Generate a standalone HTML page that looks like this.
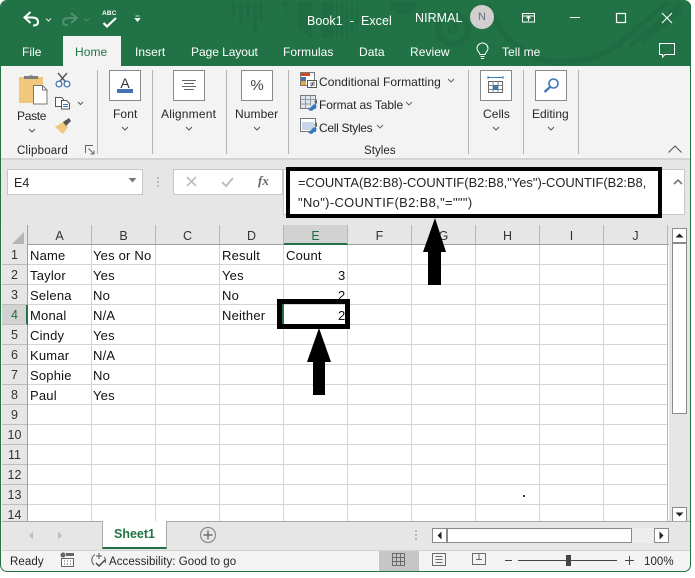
<!DOCTYPE html>
<html><head><meta charset="utf-8">
<style>
html,body{margin:0;padding:0;background:#fff;}
body{width:695px;height:578px;overflow:hidden;position:relative;font-family:"Liberation Sans",sans-serif;color:#262626;}
.a{position:absolute;white-space:nowrap;}
.t{position:absolute;white-space:nowrap;font-size:12px;line-height:16px;margin-top:1px;letter-spacing:.05px;}
.w{color:#fff;}
.c{position:absolute;white-space:nowrap;font-size:13px;line-height:20px;color:#111;letter-spacing:.2px;margin-top:1px;}
.h{position:absolute;text-align:center;font-size:12.5px;line-height:19px;color:#333;margin-top:1px;}
.bx{position:absolute;background:#fff;border:1px solid #8a8a8a;box-sizing:border-box;}
</style></head>
<body>
<div class="a" style="left:1px;top:1px;width:690px;height:571px;background:#f3f3f3;border-radius:6px;overflow:hidden"></div>
<!-- title -->
<div class="a" style="left:1px;top:1px;width:690px;height:65px;background:#217346;border-radius:6px 6px 0 0;overflow:hidden"></div>
<svg class="a" style="left:0;top:0" width="695" height="66" viewBox="0 0 695 66">
<g fill="#1f6c43">
<rect x="232" y="2" width="3" height="15"/><rect x="239" y="2" width="4" height="23"/><rect x="246" y="2" width="4" height="16"/><rect x="253" y="2" width="4" height="31"/><rect x="259" y="2" width="4" height="20"/>
<path d="M281 2h6v13z"/><path d="M298 2h14v36l-14-9z"/><path d="M321 2h12v36h-12z"/><path d="M336 2h2v36h-2zM341 2h2v36h-2zM346 2h2v36h-2zM351 2h2v30h-2zM356 2h2v25h-2z"/>
<path d="M389 2h28a14 12 0 0 1-28 0z"/>
</g>
<g fill="none" stroke="#1f6c43">
<circle cx="453" cy="29" r="15" stroke-width="6"/><circle cx="453" cy="29" r="4" stroke-width="3"/>
<path d="M487 2C500 40 530 62 560 62C590 62 610 52 622 42" stroke-width="6"/>
<path d="M618 44L668 2M630 46L681 4M642 42L682 10" stroke-width="5"/>
</g>
</svg>
<!-- QAT -->
<svg class="a" style="left:20px;top:8px" width="130" height="24" viewBox="0 0 130 24">
<path d="M10.500 4L4.500 9.500L10.500 15M4.500 9.500H12Q18 9.500 18 14Q18 17.500 13 17.500" fill="none" stroke="#fff" stroke-width="2"/>
<path d="M26 10.500l2.500 2.500 2.500-2.500" fill="none" stroke="#dfeee6" stroke-width="1"/>
<path d="M51 5L57 10L51 15M57 10H49Q43 10 43 14Q43 17 48 17" fill="none" stroke="#4f9070" stroke-width="2"/>
<path d="M64 10.500l2.500 2.500 2.500-2.500" fill="none" stroke="#4f9070" stroke-width="1"/>
<path d="M83.500 15l3.500 3.500 9-8.500" fill="none" stroke="#fff" stroke-width="2.200"/>
<path d="M115.500 8h4M115 10.500h5l-2.500 3z" fill="#fff" stroke="#fff" stroke-width=".7"/>
</svg>
<div class="a" style="left:102px;top:10px;font-size:6.500px;font-weight:bold;color:#fff;line-height:8px;letter-spacing:.2px">ABC</div>
<div class="t w" style="left:307px;top:12px;font-size:12.500px">Book1&nbsp; -&nbsp; Excel</div>
<div class="t w" style="left:415px;top:9px;font-size:12.500px">NIRMAL</div>
<div class="a" style="left:470px;top:5px;width:24px;height:24px;border-radius:50%;background:#d2d0ce;color:#6b6b88;font-size:11px;line-height:24px;text-align:center">N</div>
<svg class="a" style="left:520px;top:8px" width="170" height="20" viewBox="0 0 170 20">
<path d="M2.500 8h12M2.500 5.500h12v8.500h-12zM8.500 13V8.500M6.500 10.500l2-2 2 2" fill="none" stroke="#fff" stroke-width="1"/>
<path d="M50 9.500h10" stroke="#fff" stroke-width="1"/>
<rect x="96.500" y="5.500" width="9" height="9" fill="none" stroke="#fff" stroke-width="1.200"/>
<path d="M142 5l10 10M152 5l-10 10" stroke="#fff" stroke-width="1.100"/>
</svg>
<!-- tabs -->
<div class="a" style="left:63px;top:36px;width:58px;height:30px;background:#f3f3f3"></div>
<div class="t w" style="left:22px;top:43px">File</div>
<div class="t" style="left:75px;top:43px;color:#217346">Home</div>
<div class="t w" style="left:135px;top:43px">Insert</div>
<div class="t w" style="left:191px;top:43px;letter-spacing:-.05px">Page Layout</div>
<div class="t w" style="left:283px;top:43px">Formulas</div>
<div class="t w" style="left:359px;top:43px">Data</div>
<div class="t w" style="left:410px;top:43px">Review</div>
<div class="t w" style="left:502px;top:43px">Tell me</div>
<svg class="a" style="left:474px;top:42px" width="18" height="18" viewBox="0 0 18 18"><path d="M6 12.500C5.500 10 3 9.500 3 6.500a5.500 5.500 0 0 1 11 0c0 3-2.500 3.500-3 6zM6.500 14.500h4M7 16.500h3" fill="none" stroke="#fff" stroke-width="1"/></svg>
<svg class="a" style="left:658px;top:42px" width="18" height="18" viewBox="0 0 18 18"><path d="M1.500 1.500h15v11H7L4.500 15v-2.500h-3z" fill="none" stroke="#fff" stroke-width="1"/></svg>
<!-- ribbon -->
<div class="a" style="left:1px;top:158px;width:690px;height:2px;background:#d4d4d4"></div>
<div class="a" style="left:97px;top:70px;width:1px;height:84px;background:#b5b5b5"></div>
<div class="a" style="left:152px;top:70px;width:1px;height:84px;background:#b5b5b5"></div>
<div class="a" style="left:226px;top:70px;width:1px;height:84px;background:#b5b5b5"></div>
<div class="a" style="left:288px;top:70px;width:1px;height:84px;background:#b5b5b5"></div>
<div class="a" style="left:468px;top:70px;width:1px;height:84px;background:#b5b5b5"></div>
<div class="a" style="left:523px;top:70px;width:1px;height:84px;background:#b5b5b5"></div>
<div class="a" style="left:578px;top:70px;width:1px;height:84px;background:#b5b5b5"></div>
<!-- clipboard icons -->
<svg class="a" style="left:0;top:66px" width="97" height="72" viewBox="0 66 97 72">
<path d="M19 77h24v26H19z" fill="#f0c77b"/>
<path d="M24 79v-3h5a3 2.500 0 0 1 4 0h5v3z" fill="#7d7d7d"/>
<path d="M33.500 85.500h9l4.500 4.500v14H33.500z" fill="#fff" stroke="#777" stroke-width="1"/>
<path d="M42.500 85.500v4.500H47" fill="none" stroke="#777"/>
<path d="M58 73l9 10.500M67 73l-9 10.500" stroke="#555" stroke-width="1.400"/>
<circle cx="59" cy="84" r="2.900" fill="#fff" stroke="#3a78b8" stroke-width="1.300"/><circle cx="67" cy="84" r="2.900" fill="#fff" stroke="#3a78b8" stroke-width="1.300"/>
<path d="M55.500 97.500h6l2 2v2h-2v5h-6z" fill="#fff" stroke="#555"/><path d="M61.500 100.500h5l3 3v5.500h-8z" fill="#fff" stroke="#555"/><path d="M63 104.500h5M63 106.500h5" stroke="#3a78b8"/>
<path d="M78 102l2.500 2.500L83 102" fill="none" stroke="#555"/>
<path d="M55 127l8-5 5 5-5 7z" fill="#f0c77b"/><path d="M63 122l6-4 2 3-5 5z" fill="#555"/>
</svg>
<div class="t" style="left:17px;top:107px;letter-spacing:-.3px">Paste</div>
<svg class="a" style="left:28px;top:128px" width="8" height="6"><path d="M1 1l3 3 3-3" fill="none" stroke="#555"/></svg>
<div class="t" style="left:17px;top:142px;font-size:11.500px;letter-spacing:.2px">Clipboard</div>
<svg class="a" style="left:85px;top:145px" width="10" height="10"><path d="M.5 8V.5H8M3.500 3.500L9 9M5.500 9H9V5.500" fill="none" stroke="#666"/></svg>
<!-- boxes -->
<div class="bx" style="left:109px;top:70px;width:32px;height:31px"></div>
<div class="a" style="left:109px;top:75px;width:32px;text-align:center;font-size:14px;line-height:16px;color:#333">A</div>
<div class="a" style="left:117px;top:89px;width:16px;height:4px;background:#4472b4"></div>
<div class="t" style="left:113px;top:105px;letter-spacing:.1px">Font</div>
<div class="bx" style="left:173px;top:70px;width:32px;height:31px"></div>
<svg class="a" style="left:173px;top:70px" width="32" height="31"><path d="M9 10.500h14M11 13.500h10M9 16.500h14M11 19.500h10" stroke="#666"/></svg>
<div class="t" style="left:161px;top:105px;letter-spacing:.2px">Alignment</div>
<div class="bx" style="left:241px;top:70px;width:32px;height:31px"></div>
<div class="a" style="left:241px;top:77px;width:32px;text-align:center;font-size:15px;line-height:17px;color:#444">%</div>
<div class="t" style="left:235px;top:105px;letter-spacing:.1px">Number</div>
<svg class="a" style="left:120px;top:126px" width="10" height="6"><path d="M2 1l3 3 3-3" fill="none" stroke="#555"/></svg>
<svg class="a" style="left:184px;top:126px" width="10" height="6"><path d="M2 1l3 3 3-3" fill="none" stroke="#555"/></svg>
<svg class="a" style="left:252px;top:126px" width="10" height="6"><path d="M2 1l3 3 3-3" fill="none" stroke="#555"/></svg>
<!-- styles -->
<svg class="a" style="left:300px;top:71px" width="19" height="66" viewBox="0 0 19 66">
<rect x=".5" y="1.500" width="14" height="13" fill="#fff" stroke="#777"/><rect x="1" y="2" width="9" height="3" fill="#d24726"/><rect x="1" y="6" width="5" height="4" fill="#4472b4"/><rect x="1" y="10" width="5" height="4" fill="#e8a33d"/>
<rect x="7.500" y="9.500" width="9" height="7" fill="#fff" stroke="#555"/><path d="M10 12h5M10 14h5M13.500 10.500l-2 5" stroke="#444" stroke-width=".8" fill="none"/>
<path d="M.5 24.500h15v13H.5z" fill="#dce6f2" stroke="#777"/><path d="M.5 28.500h15M.5 33h10M5.500 24.500v13M10.500 24.500v10" stroke="#999"/>
<path d="M8 39l6-6 3 2-5 5z" fill="#3a78b8"/><path d="M14 31l3-3v5z" fill="#666"/>
<path d="M.5 47.500h15v13H.5z" fill="#fff" stroke="#777"/><rect x="2" y="51" width="12" height="8" fill="#c5d5ea"/>
<path d="M8 62l6-6 3 2-5 5z" fill="#3a78b8"/><path d="M14 54l3-3v5z" fill="#666"/>
</svg>
<div class="t" style="left:319px;top:73px">Conditional Formatting</div>
<div class="t" style="left:319px;top:96px;letter-spacing:-.12px">Format as Table</div>
<div class="t" style="left:319px;top:119px;letter-spacing:-.3px">Cell Styles</div>
<svg class="a" style="left:447px;top:78px" width="8" height="6"><path d="M1 1l3 3 3-3" fill="none" stroke="#666"/></svg>
<svg class="a" style="left:405px;top:101px" width="8" height="6"><path d="M1 1l3 3 3-3" fill="none" stroke="#666"/></svg>
<svg class="a" style="left:376px;top:124px" width="8" height="6"><path d="M1 1l3 3 3-3" fill="none" stroke="#666"/></svg>
<div class="t" style="left:364px;top:142px;font-size:11.500px">Styles</div>
<!-- cells/editing -->
<div class="bx" style="left:480px;top:70px;width:32px;height:31px"></div>
<svg class="a" style="left:480px;top:70px" width="32" height="31">
<path d="M8 7.500h15M8 6v3M23 6v3" stroke="#3a78b8"/><rect x="8.500" y="11.500" width="14" height="11" fill="#fff" stroke="#666"/><path d="M8.500 15.500h14M8.500 19.500h14M13 11.500v11M18 11.500v11" stroke="#888"/><rect x="13" y="15" width="5" height="5" fill="#3a78b8"/></svg>
<div class="t" style="left:483px;top:105px">Cells</div>
<div class="bx" style="left:535px;top:70px;width:32px;height:31px"></div>
<svg class="a" style="left:535px;top:70px" width="32" height="31"><circle cx="18.500" cy="13.500" r="4.500" fill="none" stroke="#3a78b8" stroke-width="1.600"/><path d="M15 17l-5.500 5" stroke="#3a78b8" stroke-width="2.200"/></svg>
<div class="t" style="left:532px;top:105px;letter-spacing:0">Editing</div>
<svg class="a" style="left:491px;top:126px" width="10" height="6"><path d="M2 1l3 3 3-3" fill="none" stroke="#555"/></svg>
<svg class="a" style="left:546px;top:126px" width="10" height="6"><path d="M2 1l3 3 3-3" fill="none" stroke="#555"/></svg>
<svg class="a" style="left:667px;top:144px" width="16" height="10"><path d="M1.500 8.500L8 2l6.500 6.500" fill="none" stroke="#555" stroke-width="1.100"/></svg>
<!-- formula zone -->
<div class="a" style="left:1px;top:160px;width:690px;height:65px;background:#e6e6e6"></div>
<div class="a" style="left:7px;top:169px;width:136px;height:26px;background:#fff;border:1px solid #c6c6c6;box-sizing:border-box"></div>
<div class="t" style="left:14px;top:174px;font-size:12.500px">E4</div>
<svg class="a" style="left:128px;top:178px" width="10" height="6"><path d="M.5 0h8L4.500 4.500z" fill="#777"/></svg>
<div class="a" style="left:157px;top:177px;width:2px;height:2px;background:#bbb;box-shadow:0 4px 0 #bbb,0 8px 0 #bbb"></div>
<div class="a" style="left:173px;top:169px;width:110px;height:26px;background:#fff;border:1px solid #c6c6c6;box-sizing:border-box"></div>
<svg class="a" style="left:184px;top:175px" width="60" height="14"><path d="M3 2l9 9M12 2l-9 9" stroke="#bdbdbd" stroke-width="1.600"/><path d="M38 7l4 4 7-8" fill="none" stroke="#bdbdbd" stroke-width="2"/></svg>
<div class="a" style="left:258px;top:173px;font-family:'Liberation Serif',serif;font-style:italic;font-size:13px;line-height:16px;color:#666;font-weight:bold">fx</div>
<div class="a" style="left:283px;top:169px;width:402px;height:46px;background:#fff;border:1px solid #c6c6c6;box-sizing:border-box"></div>
<svg class="a" style="left:672px;top:178px" width="12" height="8"><path d="M2 6l4-4 4 4" fill="none" stroke="#777" stroke-width="1.600"/></svg>
<div class="a" style="left:298px;top:173px;font-size:12.900px;line-height:20px;color:#222">=COUNTA(B2:B8)-COUNTIF(B2:B8,"Yes")-COUNTIF(B2:B8,</div>
<div class="a" style="left:298px;top:193px;font-size:12.900px;line-height:20px;color:#222;letter-spacing:.38px">"No")-COUNTIF(B2:B8,"=""")</div>
<div class="a" style="left:286px;top:167px;width:376px;height:51px;border:4px solid #000;box-sizing:border-box"></div>
<!-- grid -->
<div class="a" style="left:2px;top:225px;width:667px;height:296px;background:#fff"></div>
<div class="a" style="left:2px;top:225px;width:667px;height:20px;background:#e6e6e6;border-bottom:1px solid #9f9f9f;box-sizing:border-box"></div>
<div class="a" style="left:2px;top:225px;width:26px;height:296px;background:#e6e6e6;border-right:1px solid #9f9f9f;box-sizing:border-box"></div>
<div class="a" style="left:284px;top:225px;width:64px;height:20px;background:#d2d2d2;border-bottom:2px solid #217346;box-sizing:border-box"></div>
<div class="a" style="left:2px;top:305px;width:26px;height:20px;background:#d2d2d2;border-right:2px solid #217346;box-sizing:border-box"></div>
<svg class="a" style="left:0;top:225px" width="670" height="296" viewBox="0 0 670 296">
<path d="M12 19L24 7v12z" fill="#b4b4b4"/>
<g stroke="#d4d4d4" stroke-width="1">
<path d="M91.500 20V296M155.500 20V296M219.500 20V296M283.500 20V296M347.500 20V296M411.500 20V296M475.500 20V296M539.500 20V296M603.500 20V296"/>
<path d="M28 39.500H668M28 59.500H668M28 79.500H668M28 99.500H668M28 119.500H668M28 139.500H668M28 159.500H668M28 179.500H668M28 199.500H668M28 219.500H668M28 239.500H668M28 259.500H668M28 279.500H668"/>
<path d="M2 39.500H27M2 59.500H27M2 79.500H27M2 99.500H27M2 119.500H27M2 139.500H27M2 159.500H27M2 179.500H27M2 199.500H27M2 219.500H27M2 239.500H27M2 259.500H27M2 279.500H27" stroke="#bdbdbd"/>
</g>
<path d="M91.500 0V19M155.500 0V19M219.500 0V19M283.500 0V19M347.500 0V19M411.500 0V19M475.500 0V19M539.500 0V19M603.500 0V19M667.500 0V296" stroke="#b5b5b5"/>
</svg>
<div class="h" style="left:28px;top:226px;width:63px">A</div><div class="h" style="left:92px;top:226px;width:63px">B</div><div class="h" style="left:156px;top:226px;width:63px">C</div><div class="h" style="left:220px;top:226px;width:63px">D</div><div class="h" style="left:284px;top:226px;width:63px;color:#1f6b43">E</div><div class="h" style="left:348px;top:226px;width:63px">F</div><div class="h" style="left:412px;top:226px;width:63px">G</div><div class="h" style="left:476px;top:226px;width:63px">H</div><div class="h" style="left:540px;top:226px;width:63px">I</div><div class="h" style="left:604px;top:226px;width:63px">J</div>
<div class="h" style="left:2px;top:245px;width:25px">1</div><div class="h" style="left:2px;top:265px;width:25px">2</div><div class="h" style="left:2px;top:285px;width:25px">3</div><div class="h" style="left:2px;top:305px;width:25px;color:#1f6b43">4</div><div class="h" style="left:2px;top:325px;width:25px">5</div><div class="h" style="left:2px;top:345px;width:25px">6</div><div class="h" style="left:2px;top:365px;width:25px">7</div><div class="h" style="left:2px;top:385px;width:25px">8</div><div class="h" style="left:2px;top:405px;width:25px">9</div><div class="h" style="left:2px;top:425px;width:25px">10</div><div class="h" style="left:2px;top:445px;width:25px">11</div><div class="h" style="left:2px;top:465px;width:25px">12</div><div class="h" style="left:2px;top:485px;width:25px">13</div><div class="h" style="left:2px;top:505px;width:25px">14</div>
<div class="c" style="left:30px;top:245px">Name</div><div class="c" style="left:93px;top:245px">Yes or No</div><div class="c" style="left:222px;top:245px">Result</div><div class="c" style="left:286px;top:245px">Count</div>
<div class="c" style="left:30px;top:265px">Taylor</div><div class="c" style="left:93px;top:265px">Yes</div><div class="c" style="left:222px;top:265px">Yes</div><div class="c" style="left:338px;top:265px">3</div>
<div class="c" style="left:30px;top:285px">Selena</div><div class="c" style="left:93px;top:285px">No</div><div class="c" style="left:222px;top:285px">No</div><div class="c" style="left:338px;top:285px">2</div>
<div class="c" style="left:30px;top:305px">Monal</div><div class="c" style="left:93px;top:305px">N/A</div><div class="c" style="left:222px;top:305px">Neither</div><div class="c" style="left:338px;top:305px">2</div>
<div class="c" style="left:30px;top:325px">Cindy</div><div class="c" style="left:93px;top:325px">Yes</div>
<div class="c" style="left:30px;top:345px">Kumar</div><div class="c" style="left:93px;top:345px">N/A</div>
<div class="c" style="left:30px;top:365px">Sophie</div><div class="c" style="left:93px;top:365px">No</div>
<div class="c" style="left:30px;top:385px">Paul</div><div class="c" style="left:93px;top:385px">Yes</div>
<!-- selected annotation -->
<div class="a" style="left:277px;top:299px;width:73px;height:30px;border:5px solid #000;box-sizing:border-box"></div>
<div class="a" style="left:282px;top:304px;width:2px;height:20px;background:#217346"></div>
<svg class="a" style="left:0;top:0" width="695" height="578" viewBox="0 0 695 578">
<path d="M319 328L331 362H325V395H313V362H307z" fill="#000"/>
<path d="M435 218L446 252H441V285H428V252H423z" fill="#000"/>
<rect x="523" y="495" width="2" height="2" fill="#333"/>
</svg>
<!-- vscrollbar -->
<div class="a" style="left:669px;top:225px;width:21px;height:296px;background:#e6e6e6"></div>
<div class="bx" style="left:672px;top:228px;width:15px;height:15px"></div>
<svg class="a" style="left:672px;top:228px" width="15" height="15"><path d="M3.500 9.500h8L7.500 5.500z" fill="#222"/></svg>
<div class="bx" style="left:672px;top:243px;width:15px;height:171px"></div>
<div class="bx" style="left:672px;top:507px;width:15px;height:15px"></div>
<svg class="a" style="left:672px;top:507px" width="15" height="15"><path d="M3.500 5.500h8L7.500 9.500z" fill="#222"/></svg>
<!-- sheet tabs -->
<div class="a" style="left:2px;top:521px;width:688px;height:29px;background:#e6e6e6;border-top:1px solid #a8a8a8;box-sizing:border-box"></div>
<div class="a" style="left:102px;top:521px;width:65px;height:28px;background:#fff;border-left:1px solid #a8a8a8;border-right:1px solid #a8a8a8;border-bottom:2px solid #217346;box-sizing:border-box"></div>
<div class="a" style="left:102px;top:526px;width:65px;text-align:center;font-size:12.500px;line-height:16px;font-weight:bold;color:#217346">Sheet1</div>
<svg class="a" style="left:28px;top:530px" width="40" height="11"><path d="M5 1.500L1 5.500l4 4zM30 1.500l4 4-4 4z" fill="#c0c0c0"/></svg>
<svg class="a" style="left:199px;top:526px" width="18" height="18"><circle cx="9" cy="9" r="7.500" fill="none" stroke="#8a8a8a" stroke-width="1.200"/><path d="M9 4.500v9M4.500 9h9" stroke="#6f6f6f" stroke-width="1.400"/></svg>
<div class="a" style="left:415px;top:530px;width:2px;height:2px;background:#b8b8b8;box-shadow:0 4px 0 #b8b8b8,0 8px 0 #b8b8b8"></div>
<div class="bx" style="left:432px;top:528px;width:15px;height:15px"></div>
<svg class="a" style="left:432px;top:528px" width="15" height="15"><path d="M9.500 3.500v8L5.500 7.500z" fill="#222"/></svg>
<div class="bx" style="left:447px;top:528px;width:185px;height:15px"></div>
<div class="a" style="left:632px;top:528px;width:22px;height:15px;background:#ededed"></div>
<div class="bx" style="left:654px;top:528px;width:15px;height:15px"></div>
<svg class="a" style="left:654px;top:528px" width="15" height="15"><path d="M5.500 3.500v8l4-4z" fill="#222"/></svg>
<!-- status -->
<div class="a" style="left:2px;top:550px;width:688px;height:21px;background:#f3f3f3;border-top:1px solid #d2d2d2;box-sizing:border-box"></div>
<div class="t" style="left:10px;top:553px;font-size:11.500px;letter-spacing:.1px">Ready</div>
<svg class="a" style="left:59px;top:552px" width="16" height="16"><circle cx="4" cy="3" r="2.500" fill="#666"/><rect x="7" y="1" width="8" height="3" fill="#666"/><rect x="2.500" y="6.500" width="12" height="8" fill="#fff" stroke="#666"/><path d="M5 9h1M8 9h1M11 9h1M5 12h1M8 12h1M11 12h1" stroke="#555"/></svg>
<svg class="a" style="left:90px;top:552px" width="18" height="16"><path d="M4 13C1 10 1 5 5 2.500M9 1v6M6 4h6M14 5c2 2 2 4 1 6" fill="none" stroke="#555"/><path d="M6 11l3 3 6-6" fill="none" stroke="#444" stroke-width="1.400"/></svg>
<div class="t" style="left:109px;top:553px;font-size:11.500px;letter-spacing:.05px">Accessibility: Good to go</div>
<div class="a" style="left:379px;top:551px;width:40px;height:20px;background:#c6c6c6"></div>
<svg class="a" style="left:390px;top:552px" width="250" height="18">
<path d="M2.500 1.500h12v12h-12zM2.500 5.500h12M2.500 9.500h12M6.500 1.500v12M10.500 1.500v12" fill="none" stroke="#6b6b6b"/>
<path d="M42.500 1.500h13v12h-13z" fill="none" stroke="#6b6b6b"/><path d="M45.500 4.500h7M45.500 7.500h7M45.500 10.500h7" stroke="#6b6b6b"/>
<path d="M82.500 1.500h13v11h-13zM89 1.500v6h-3M89 7.500h3" fill="none" stroke="#6b6b6b"/>
<path d="M115 8.500h7" stroke="#444"/>
<path d="M128 8.500h99" stroke="#444"/>
</svg>
<div class="a" style="left:566px;top:555px;width:5px;height:11px;background:#444"></div>
<svg class="a" style="left:624px;top:554px" width="12" height="12"><path d="M1 6.500h9M5.500 2v9" stroke="#444"/></svg>
<div class="t" style="left:644px;top:553px;font-size:11.500px">100%</div>
<!-- window border -->
<div class="a" style="left:0;top:0;width:691px;height:572px;border:1.500px solid #217346;border-radius:7px;box-sizing:border-box;pointer-events:none"></div>
<div class="a" style="left:0;top:572px;width:695px;height:6px;background:#fff"></div>
<div class="a" style="left:691px;top:0;width:4px;height:578px;background:#fff"></div>
</body></html>
